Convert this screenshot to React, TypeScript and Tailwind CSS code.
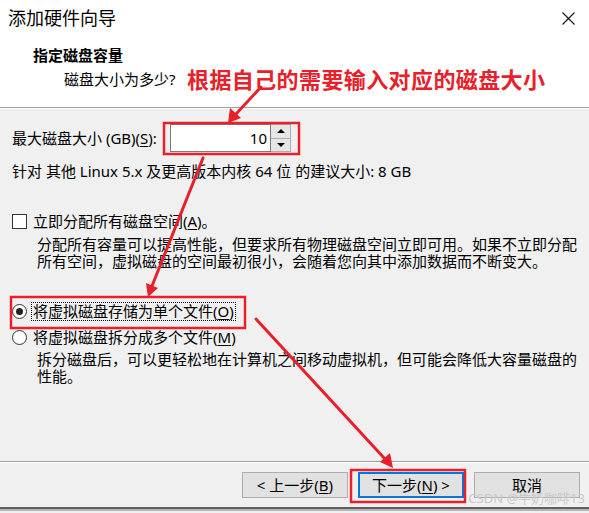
import { ReactNode } from "react";

const font = { fontFamily: '"Noto Sans", "Noto Sans CJK SC", sans-serif' };

const U = ({ children }: { children: ReactNode }) => (
  <span className="underline underline-offset-2">{children}</span>
);

const Btn = ({ children, primary }: { children: ReactNode; primary?: boolean }) => (
  <div
    className={
      "w-[106px] h-[26px] flex items-center justify-center bg-[#e1e1e1] text-[15px] text-black " +
      (primary ? "border-2 border-[#0078d7]" : "border border-[#adadad]")
    }
  >
    {children}
  </div>
);

const Radio = ({ checked }: { checked?: boolean }) => (
  <div className="w-[15px] h-[15px] rounded-full border border-[#333] bg-white flex items-center justify-center shrink-0">
    {checked && <div className="w-[7px] h-[7px] rounded-full bg-[#222]" />}
  </div>
);

const Overlay = () => (
  <svg className="absolute inset-0 pointer-events-none" width="589" height="513">
    <g fill="none" stroke="#e8202a" strokeWidth="2.5">
      <rect x="164" y="123" width="135" height="31" />
      <rect x="11" y="297" width="234" height="31" />
      <rect x="351" y="470" width="114" height="32" />
    </g>
    <g stroke="#e8202a" strokeWidth="3" strokeLinecap="round">
      <line x1="261" y1="87" x2="236" y2="114" />
      <line x1="203" y1="158" x2="152" y2="286" />
      <line x1="256" y1="319" x2="385" y2="459" />
    </g>
    <g fill="#e8202a">
      <polygon points="228,123 230,108 241,118" />
      <polygon points="148,297 146,283 158,288" />
      <polygon points="393,468 380,462 390,453" />
    </g>
  </svg>
);

export default function App() {
  return (
    <div className="relative w-[589px] h-[513px] overflow-hidden bg-[#f0f0f0] text-black" style={font}>
      {/* header */}
      <div className="h-[108px] bg-white border-b border-[#a0a0a0]">
        <div className="flex justify-between items-start pl-[8px] pr-[14px] pt-[6px]">
          <div className="text-[18px] leading-[24px]">添加硬件向导</div>
          <svg width="13" height="13" viewBox="0 0 13 13" className="mt-[6px]">
            <path d="M0.5 0.5 L12.5 12.5 M12.5 0.5 L0.5 12.5" stroke="#111" strokeWidth="1.1" />
          </svg>
        </div>
        <div className="pl-[33px] mt-[15px] text-[15px] leading-[20px] font-bold">指定磁盘容量</div>
        <div className="flex items-center h-[26px] mt-[1px]">
          <div className="w-[187px] pl-[64px] text-[15px] whitespace-nowrap">磁盘大小为多少?</div>
          <div className="text-[22px] leading-[26px] font-bold text-[#e8202a] whitespace-nowrap tracking-[0.4px]">
            根据自己的需要输入对应的磁盘大小
          </div>
        </div>
      </div>
      <div className="h-px bg-white" />

      {/* body */}
      <div className="h-[352px] pl-[12px] pt-[15px] text-[15px]">
        <div className="flex items-center h-[28px]">
          <div className="w-[158px] whitespace-nowrap">
            最大磁盘大小 (GB)(<U>S</U>):
          </div>
          <div className="flex h-[28px]">
            <div className="w-[101px] h-full bg-white border border-[#7a7a7a] flex items-center justify-end pr-[3px]">
              10
            </div>
            <div className="w-[20px] h-full flex flex-col border border-[#adadad] border-l-0 bg-white">
              <div className="flex-1 bg-[#e6e6e6] border-b border-[#adadad] flex items-center justify-center">
                <div className="w-0 h-0 border-l-[4px] border-r-[4px] border-b-[4px] border-l-transparent border-r-transparent border-b-black" />
              </div>
              <div className="flex-1 bg-[#e6e6e6] flex items-center justify-center">
                <div className="w-0 h-0 border-l-[4px] border-r-[4px] border-t-[4px] border-l-transparent border-r-transparent border-t-black" />
              </div>
            </div>
          </div>
        </div>
        <div className="mt-[9px] leading-[20px] whitespace-nowrap">
          针对 其他 Linux 5.x 及更高版本内核 64 位 的建议大小: 8 GB
        </div>

        <div className="flex items-center h-[20px] mt-[30px] whitespace-nowrap">
          <div className="w-[15px] h-[15px] border border-[#333] bg-white mr-[6px]" />
          立即分配所有磁盘空间(<U>A</U>)。
        </div>
        <div className="pl-[25px] mt-[5px] leading-[17px] whitespace-nowrap">
          <div>分配所有容量可以提高性能，但要求所有物理磁盘空间立即可用。如果不立即分配</div>
          <div>所有空间，虚拟磁盘的空间最初很小，会随着您向其中添加数据而不断变大。</div>
        </div>

        <div className="flex items-center h-[20px] mt-[31px] whitespace-nowrap">
          <Radio checked />
          <div className="ml-[4px] border border-dotted border-black px-[1px] leading-[17px]">
            将虚拟磁盘存储为单个文件(<U>O</U>)
          </div>
        </div>
        <div className="flex items-center h-[20px] mt-[6px] whitespace-nowrap">
          <Radio />
          <div className="ml-[6px]">
            将虚拟磁盘拆分成多个文件(<U>M</U>)
          </div>
        </div>
        <div className="pl-[25px] mt-[4px] leading-[17px] whitespace-nowrap">
          <div>拆分磁盘后，可以更轻松地在计算机之间移动虚拟机，但可能会降低大容量磁盘的</div>
          <div>性能。</div>
        </div>
      </div>

      {/* footer */}
      <div className="border-t border-[#a0a0a0]">
        <div className="h-px bg-white" />
        <div className="h-[46px] flex items-start justify-end gap-[10px] pr-[9px] pt-[9px] border-b-2 border-[#5f5f5f]">
          <Btn>
            &lt; 上一步(<U>B</U>)
          </Btn>
          <Btn primary>
            下一步(<U>N</U>) &gt;
          </Btn>
          <Btn>取消</Btn>
        </div>
        <div className="h-[2px] bg-[#b5b5b5]" />
      </div>

      <div className="absolute right-[4px] top-[489px] text-[13px] text-[#c9c9c9] whitespace-nowrap">
        CSDN @牛奶咖啡13
      </div>

      <Overlay />
    </div>
  );
}
